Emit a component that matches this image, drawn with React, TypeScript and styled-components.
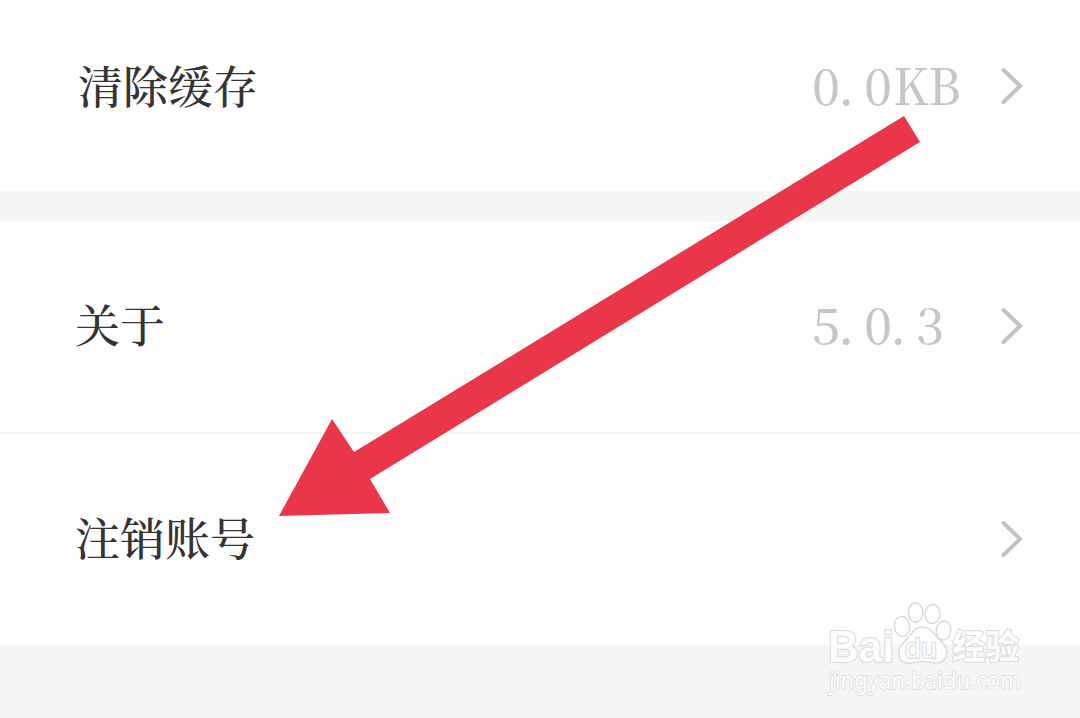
import React from 'react';
import styled, { createGlobalStyle } from 'styled-components';

const GlobalStyle = createGlobalStyle`
  body { margin: 0; background: #f5f5f5; overflow: hidden; }
`;

const Screen = styled.main`
  position: relative;
  display: flex;
  flex-direction: column;
  width: 1080px;
  height: 718px;
  overflow: hidden;
  background: #f5f5f5;
  font-family: 'Noto Serif CJK SC', 'Noto Sans CJK SC', serif;
`;

const Row = styled.div<{ $height: number; $inset?: number; $bottom?: number; $divided?: boolean }>`
  box-sizing: border-box;
  flex: none;
  display: flex;
  align-items: center;
  height: ${(p) => p.$height}px;
  padding: 0 56px ${(p) => p.$bottom ?? 2}px ${(p) => p.$inset ?? 75}px;
  background: #fefefe;
  border-bottom: ${(p) => (p.$divided ? '2px solid #f5f5f5' : 'none')};
`;

const Gap = styled.div`
  flex: none;
  height: 30px;
  background: #f5f5f5;
`;

const Label = styled.span`
  flex: 1;
  padding-bottom: 3px;
  color: #333;
  font-size: 45px;
  font-weight: 500;
  line-height: 60px;
  white-space: nowrap;
`;

const Value = styled.span`
  display: flex;
  width: 156px;
  margin-right: 32px;
  padding-bottom: 7px;
  color: #c6c6c6;
  font-size: 50px;
  font-weight: 500;
  line-height: 60px;
`;

const Glyph = styled.span<{ $width: number; $scale: number }>`
  display: block;
  flex: none;
  width: ${(p) => p.$width}px;
  transform: scaleX(${(p) => p.$scale});
  transform-origin: left;
`;

const ChevronIcon = styled.svg`
  flex: none;
  width: 24px;
  height: 40px;
`;

const ArrowMark = styled.svg`
  position: absolute;
  inset: 0;
  pointer-events: none;
`;

const Watermark = styled.svg`
  position: absolute;
  left: 820px;
  top: 595px;
`;

const advances: Record<string, [number, number]> = {
  K: [35, 0.96],
  B: [30, 0.96],
};

const Reading = ({ text }: { text: string }) => (
  <Value>
    {text.split('').map((char, i) => {
      const beforeLetter = /[A-Z]/.test(text[i + 1] ?? '') && /\d/.test(char);
      const [width, scale] = advances[char] ?? [beforeLetter ? 29 : 26, 1];
      return <Glyph key={i} $width={width} $scale={scale}>{char}</Glyph>;
    })}
  </Value>
);

const Chevron = () => (
  <ChevronIcon viewBox="0 0 24 40" fill="none">
    <path d="M3.5 4 20 20 3.5 36" stroke="#c2c2c2" strokeWidth="4" strokeLinecap="round" strokeLinejoin="miter" />
  </ChevronIcon>
);

export default function App() {
  return (
    <>
      <GlobalStyle />
      <Screen>
        <Row $height={191} $inset={78} $bottom={19}>
          <Label>清除缓存</Label>
          <Reading text="0.0KB" />
          <Chevron />
        </Row>
        <Gap />
        <Row $height={213} $divided>
          <Label>关于</Label>
          <Reading text="5.0.3" />
          <Chevron />
        </Row>
        <Row $height={211}>
          <Label>注销账号</Label>
          <Chevron />
        </Row>

        <ArrowMark width="1080" height="718" viewBox="0 0 1080 718">
          <path d="M904 116 920 142 370 479 390 513 279 516 332 419 354 452Z" fill="#e93648" />
        </ArrowMark>

        <Watermark width="210" height="105" viewBox="820 595 210 105">
          <g fill="#fdfdfd" stroke="#d9d9d9" strokeWidth="1.4">
            <ellipse cx="902" cy="626.5" rx="7.6" ry="10" transform="rotate(-8 902 626.5)" />
            <ellipse cx="915.5" cy="612.5" rx="7.3" ry="9.8" />
            <ellipse cx="932.5" cy="614" rx="7.5" ry="9.6" transform="rotate(8 932.5 614)" />
            <ellipse cx="943.5" cy="630.5" rx="7.3" ry="9.6" transform="rotate(8 943.5 630.5)" />
            <path d="M922 627C914 627 911 635 906 640C901 645 898 648 899 655C900 662 905 664 911 663C918 661 927 661 934 663C941 664 946 660 947 653C947 646 941 641 936 636C932 631 929 627 922 627Z" />
          </g>
          <g fill="#fdfdfd" stroke="#dadada" strokeWidth="2" paintOrder="stroke" fontFamily="'Liberation Sans', 'Noto Sans CJK SC', sans-serif">
            <text x="828" y="662" fontSize="44" fontWeight="700" textLength="66" lengthAdjust="spacingAndGlyphs">Bai</text>
            <text x="905" y="658" fontSize="27" textLength="32" lengthAdjust="spacingAndGlyphs">du</text>
            <text x="952" y="659" fontSize="34" fontWeight="700" textLength="67" lengthAdjust="spacingAndGlyphs">经验</text>
            <text x="829" y="689" fontSize="23" textLength="192" lengthAdjust="spacingAndGlyphs" strokeWidth="1.5" fontFamily="'Noto Sans', sans-serif">jingyan.baidu.com</text>
          </g>
        </Watermark>
      </Screen>
    </>
  );
}
